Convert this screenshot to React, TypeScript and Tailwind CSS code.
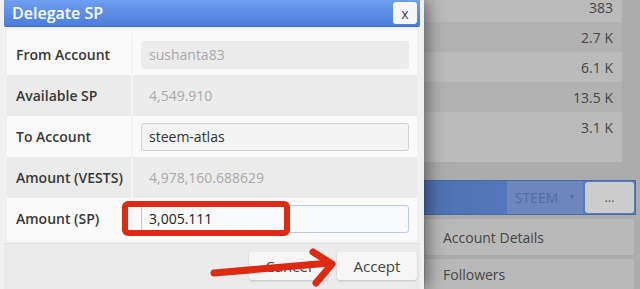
import { ReactNode } from 'react'

type Field = {
  label: string
  value: string
  kind: 'disabled' | 'edit' | 'focus'
}

const fields: Field[] = [
  { label: 'From Account', value: 'sushanta83', kind: 'disabled' },
  { label: 'Available SP', value: '4,549.910', kind: 'disabled' },
  { label: 'To Account', value: 'steem-atlas', kind: 'edit' },
  { label: 'Amount (VESTS)', value: '4,978,160.688629', kind: 'disabled' },
  { label: 'Amount (SP)', value: '3,005.111', kind: 'focus' },
]

const stats = ['383', '2.7 K', '6.1 K', '13.5 K', '3.1 K']

function Input({ field }: { field: Field }) {
  const styles = {
    disabled: 'bg-[#ececec] border-[#ececec] text-[#a9a9a9]',
    edit: 'bg-[#f4f4f4] border-[#d2d2d2] text-[#333]',
    focus: 'bg-[#f8f9fb] border-[#bccbe2] text-[#222]',
  }
  return (
    <div
      className={`h-[28px] rounded-[3px] border px-[7px] flex items-center text-[14px] ${styles[field.kind]}`}
    >
      {field.value}
    </div>
  )
}

function Button({ children }: { children: ReactNode }) {
  return (
    <button className="w-full h-[28px] rounded-[3px] bg-[#f6f6f6] text-[15px] text-[#444] shadow-[0_1px_2px_rgba(0,0,0,0.18)] flex items-center justify-center">
      {children}
    </button>
  )
}

function DelegateDialog() {
  return (
    <div className="relative z-10 w-[424px] h-full shrink-0 bg-[#f1f1f1] px-[4px] flex flex-col shadow-[3px_0_16px_rgba(0,0,0,0.5)]">
      {/* Title bar */}
      <div className="h-[27px] shrink-0 rounded-b-[2px] bg-gradient-to-b from-[#6f9ff0] to-[#4a7edc] border-b border-[#3f6fcc] flex items-center justify-between pl-[8px] pr-[3px]">
        <span className="text-white text-[16px] font-semibold">Delegate SP</span>
        <div className="w-[24px] h-[22px] rounded-[3px] bg-[#f6f6f6] text-[#444] text-[14px] flex items-center justify-center">
          x
        </div>
      </div>

      {/* Fields */}
      <div className="mt-[3px] mx-[3px] bg-[#fafafa] pt-[4px] pb-[2px]">
        {fields.map((f, i) => (
          <div
            key={f.label}
            className={`grid grid-cols-[126px_1fr] h-[41px] ${i % 2 === 1 ? 'bg-[#ebebeb]' : ''}`}
          >
            <div className="flex items-center pl-[9px] text-[14px] font-semibold text-[#383838] border-r-2 border-[#f4f4f4]">
              {f.label}
            </div>
            <div className="flex flex-col justify-center pl-[8px] pr-[8px]">
              <Input field={f} />
            </div>
          </div>
        ))}
      </div>

      {/* Footer */}
      <div className="mt-[2px] flex-1 bg-[#ebebeb] border-t border-[#dedede] flex justify-end items-start gap-[9px] pt-[8px] pr-[3px]">
        <div className="w-[79px]">
          <Button>Cancel</Button>
        </div>
        <div className="w-[80px]">
          <Button>Accept</Button>
        </div>
      </div>
    </div>
  )
}

function PageBehind() {
  return (
    <div className="flex-1 flex flex-col bg-[#acacac]">
      <div className="mr-[18px] bg-[#bbbbbb] border-b border-[#a9a9a9] pb-[20px] rounded-b-[2px]">
        <div className="mt-[-8px]">
          {stats.map((s, i) => (
            <div
              key={s}
              className={`h-[30px] flex items-center justify-end pr-[9px] text-[14px] text-[#454545] ${
                i % 2 === 1 ? 'bg-[#b2b2b2]' : ''
              }`}
            >
              {s}
            </div>
          ))}
        </div>
      </div>

      <div className="mt-[17px] mr-[4px] h-[35px] bg-gradient-to-r from-[#4f72b6] to-[#5b7ec0] border border-[#4a69a8] flex items-center justify-end gap-[2px] pr-[1px]">
        <div className="w-[76px] h-[33px] bg-[#6c87bb] text-[#566d9c] text-[14px] flex items-center justify-center gap-[10px]">
          STEEM
          <span className="text-[7px]">▼</span>
        </div>
        <div className="w-[49px] h-[31px] rounded-[3px] bg-[#cdcdcd] text-[#555] text-[13px] flex items-center justify-center">
          ...
        </div>
      </div>

      <div className="mt-[3px] mr-[5px] flex flex-col gap-[2px]">
        <div className="h-[38px] bg-[#b9b9b9] border border-[#ababab] rounded-[2px] flex items-center pl-[18px] text-[14px] text-[#454545]">
          Account Details
        </div>
        <div className="h-[32px] bg-[#b9b9b9] border border-[#ababab] rounded-[2px] flex items-center pl-[18px] text-[14px] text-[#454545]">
          Followers
        </div>
      </div>
    </div>
  )
}

export default function App() {
  return (
    <div
      className="relative w-[640px] h-[289px] overflow-hidden flex"
      style={{ fontFamily: '"Open Sans", "Noto Sans", sans-serif' }}
    >
      <DelegateDialog />
      <PageBehind />

      {/* Red annotations */}
      <svg
        className="absolute inset-0 z-20 pointer-events-none"
        width="640"
        height="289"
        viewBox="0 0 640 289"
      >
        <rect x="125" y="204" width="162" height="29" rx="3" fill="none" stroke="#dd2a12" strokeWidth="6" />
        <path
          d="M214 273 L330 263 M313 252 L332 264 L316 283"
          fill="none"
          stroke="#dd2a12"
          strokeWidth="7"
          strokeLinecap="round"
          strokeLinejoin="round"
        />
      </svg>
    </div>
  )
}
